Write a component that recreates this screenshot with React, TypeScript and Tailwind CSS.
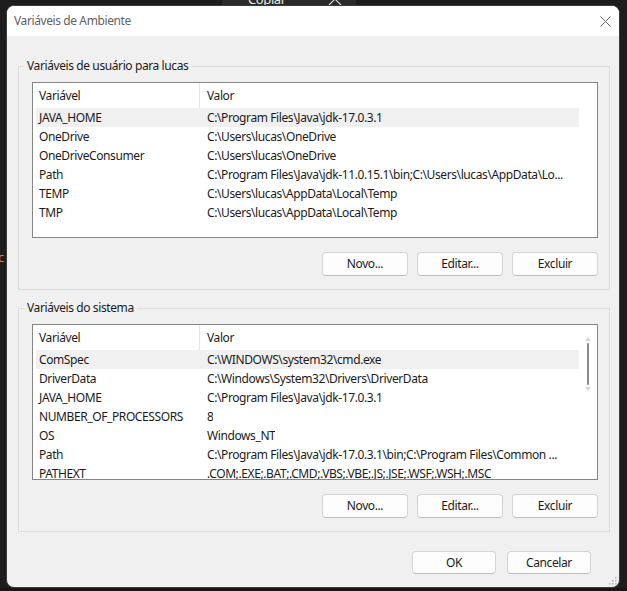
import React from "react";

type Row = { name: string; value: string };

const USER_VARS: Row[] = [
  { name: "JAVA_HOME", value: "C:\\Program Files\\Java\\jdk-17.0.3.1" },
  { name: "OneDrive", value: "C:\\Users\\lucas\\OneDrive" },
  { name: "OneDriveConsumer", value: "C:\\Users\\lucas\\OneDrive" },
  { name: "Path", value: "C:\\Program Files\\Java\\jdk-11.0.15.1\\bin;C:\\Users\\lucas\\AppData\\Lo..." },
  { name: "TEMP", value: "C:\\Users\\lucas\\AppData\\Local\\Temp" },
  { name: "TMP", value: "C:\\Users\\lucas\\AppData\\Local\\Temp" },
];

const SYSTEM_VARS: Row[] = [
  { name: "ComSpec", value: "C:\\WINDOWS\\system32\\cmd.exe" },
  { name: "DriverData", value: "C:\\Windows\\System32\\Drivers\\DriverData" },
  { name: "JAVA_HOME", value: "C:\\Program Files\\Java\\jdk-17.0.3.1" },
  { name: "NUMBER_OF_PROCESSORS", value: "8" },
  { name: "OS", value: "Windows_NT" },
  { name: "Path", value: "C:\\Program Files\\Java\\jdk-17.0.3.1\\bin;C:\\Program Files\\Common ..." },
  { name: "PATHEXT", value: ".COM;.EXE;.BAT;.CMD;.VBS;.VBE;.JS;.JSE;.WSF;.WSH;.MSC" },
];

function WinButton({ label, wide }: { label: string; wide?: boolean }) {
  return (
    <button
      className={`${wide ? "w-[86px] h-[24px]" : "w-[84px] h-[23px]"} rounded-[4px] border border-[#d3d3d3] border-b-[#bdbdbd] bg-[#fdfdfd] text-[#1b1b1b] flex items-center justify-center`}
    >
      {label}
    </button>
  );
}

function VarList({ rows, scroll }: { rows: Row[]; scroll?: boolean }) {
  return (
    <div className="relative h-[156px] w-[566px] overflow-hidden border border-[#858585] bg-white">
      {/* header */}
      <div className="flex h-[25px] w-[546px] items-center">
        <div className="flex h-full w-[167px] items-center border-r border-[#e5e5e5] pl-[6px]">Variável</div>
        <div className="pl-[7px]">Valor</div>
      </div>
      {rows.map((r, i) => (
        <div
          key={r.name + i}
          className={`ml-[3px] flex h-[19px] w-[543px] items-center whitespace-nowrap ${i === 0 ? "bg-[#f0f0f0]" : ""}`}
        >
          <div className="w-[171px] shrink-0 pl-[3px]">{r.name}</div>
          <div className="overflow-hidden">{r.value}</div>
        </div>
      ))}
      {scroll && (
        <div className="absolute left-[551px] top-[12px] flex w-[8px] flex-col items-center">
          <svg width="6" height="4" viewBox="0 0 6 4">
            <path d="M0 4 L3 0 L6 4 Z" fill="#d6d6d6" />
          </svg>
          <div className="mt-[2px] h-[42px] w-[2px] rounded-full bg-[#8a8a8a]" />
          <svg width="6" height="4" viewBox="0 0 6 4" className="mt-[2px]">
            <path d="M0 0 L3 4 L6 0 Z" fill="#d6d6d6" />
          </svg>
        </div>
      )}
    </div>
  );
}

function GroupBox({ title, rows, scroll, className }: { title: string; rows: Row[]; scroll?: boolean; className: string }) {
  return (
    <fieldset className={`ml-[11px] w-[592px] border border-[#dcdcdc] pb-[13px] pl-[13px] pr-[11px] pt-[8px] ${className}`}>
      <legend className="ml-[-8px] px-[3px] leading-[16px] text-[#1b1b1b]">{title}</legend>
      <VarList rows={rows} scroll={scroll} />
      <div className="mt-[14px] flex w-[566px] justify-end gap-[9px]">
        <WinButton label="Novo..." wide />
        <WinButton label="Editar..." wide />
        <WinButton label="Excluir" wide />
      </div>
    </fieldset>
  );
}

export default function App() {
  return (
    <div
      className="relative h-[591px] w-[627px] overflow-hidden bg-[#1d1d1d] text-[12px] tracking-[-0.4px] text-[#1b1b1b]"
      style={{ fontFamily: '"Noto Sans", "Segoe UI", sans-serif' }}
    >
      {/* desktop behind the dialog */}
      <div className="absolute left-[222px] top-0 h-[6px] w-[134px] bg-[#2a2a2a]" />
      <div className="absolute left-[248px] top-[-9px] text-[13px] leading-[16px] text-[#e8e8e8]">Copiar</div>
      <svg className="absolute left-[328px] top-[-2px]" width="14" height="8" viewBox="0 0 14 8">
        <path d="M1 7 L7 1 L13 7" fill="none" stroke="#d0d0d0" strokeWidth="1.2" />
      </svg>
      <div className="absolute left-[-9px] top-[249px] text-[13px] leading-[16px] text-[#c9825c]">ac</div>
      <div className="absolute bottom-0 left-0 h-[3px] w-full bg-[#161616]" />

      {/* dialog window */}
      <div className="absolute left-[6px] top-[5px] h-[583px] w-[614px] overflow-hidden rounded-[8px] border border-[#3c3c3c] bg-[#f0f0f0]">
        <div className="flex h-[30px] items-center justify-between bg-white pl-[7px] pr-[8px]">
          <span className="text-[#5f5f5f]">Variáveis de Ambiente</span>
          <svg width="11" height="11" viewBox="0 0 11 11">
            <path d="M0.5 0.5 L10.5 10.5 M10.5 0.5 L0.5 10.5" stroke="#6a6a6a" strokeWidth="1" />
          </svg>
        </div>

        <GroupBox className="mt-[22px]" title="Variáveis de usuário para lucas" rows={USER_VARS} />
        <GroupBox className="mt-[10px]" title="Variáveis do sistema" rows={SYSTEM_VARS} scroll />

        <div className="mt-[19px] flex justify-end gap-[11px] pr-[28px]">
          <WinButton label="OK" />
          <WinButton label="Cancelar" />
        </div>

        <svg className="absolute bottom-[2px] right-[2px]" width="8" height="8" viewBox="0 0 8 8">
          <g fill="#b5b5b5">
            <rect x="6" y="0" width="1.5" height="1.5" />
            <rect x="3" y="3" width="1.5" height="1.5" />
            <rect x="6" y="3" width="1.5" height="1.5" />
            <rect x="0" y="6" width="1.5" height="1.5" />
            <rect x="3" y="6" width="1.5" height="1.5" />
            <rect x="6" y="6" width="1.5" height="1.5" />
          </g>
        </svg>
      </div>
    </div>
  );
}
